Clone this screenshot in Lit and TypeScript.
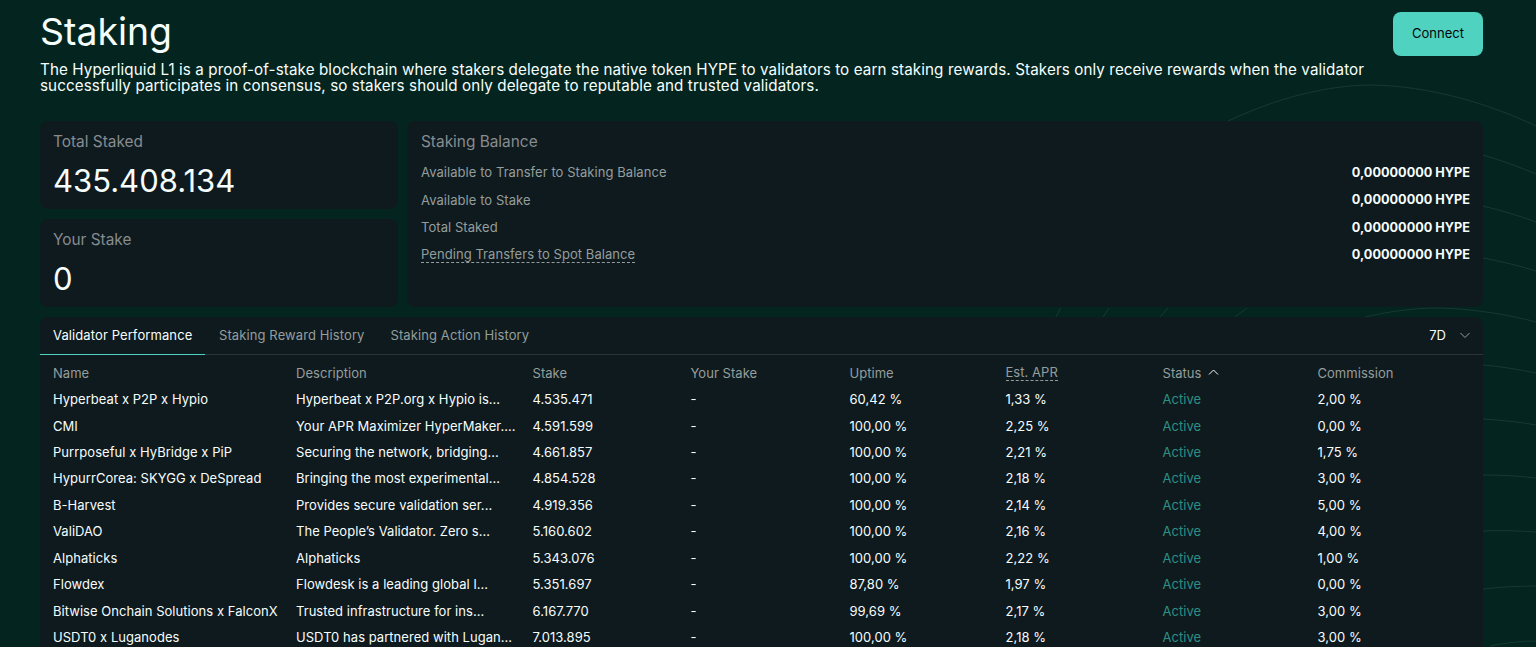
import { LitElement, html, css, svg } from "lit";
import { customElement } from "lit/decorators.js";

const rows = [
  ["Hyperbeat x P2P x Hypio", "Hyperbeat x P2P.org x Hypio is...", "4.535.471", "60,42 %", "1,33 %", "2,00 %"],
  ["CMI", "Your APR Maximizer HyperMaker....", "4.591.599", "100,00 %", "2,25 %", "0,00 %"],
  ["Purrposeful x HyBridge x PiP", "Securing the network, bridging...", "4.661.857", "100,00 %", "2,21 %", "1,75 %"],
  ["HypurrCorea: SKYGG x DeSpread", "Bringing the most experimental...", "4.854.528", "100,00 %", "2,18 %", "3,00 %"],
  ["B-Harvest", "Provides secure validation ser...", "4.919.356", "100,00 %", "2,14 %", "5,00 %"],
  ["ValiDAO", "The People’s Validator. Zero s...", "5.160.602", "100,00 %", "2,16 %", "4,00 %"],
  ["Alphaticks", "Alphaticks", "5.343.076", "100,00 %", "2,22 %", "1,00 %"],
  ["Flowdex", "Flowdesk is a leading global l...", "5.351.697", "87,80 %", "1,97 %", "0,00 %"],
  ["Bitwise Onchain Solutions x FalconX", "Trusted infrastructure for ins...", "6.167.770", "99,69 %", "2,17 %", "3,00 %"],
  ["USDT0 x Luganodes", "USDT0 has partnered with Lugan...", "7.013.895", "100,00 %", "2,18 %", "3,00 %"],
];

const balance = [
  ["Available to Transfer to Staking Balance", false],
  ["Available to Stake", false],
  ["Total Staked", false],
  ["Pending Transfers to Spot Balance", true],
] as const;

@customElement("app-root")
export class AppRoot extends LitElement {
  static styles = css`
    :host {
      display: block;
      height: 647px;
      overflow: hidden;
      position: relative;
      background: #04251f;
      font-family: Inter, "Liberation Sans", sans-serif;
      color: #f6fefd;
    }
    .bg { position: absolute; inset: 0; width: 100%; height: 100%; }
    .page {
      position: relative;
      padding: 12px 53px 0 40px;
      display: flex;
      flex-direction: column;
    }
    .head { display: flex; justify-content: space-between; align-items: flex-start; }
    h1 {
      margin: 0;
      font-size: 37.4px;
      line-height: 40px;
      font-weight: 400;
    }
    .connect {
      width: 90px;
      height: 44px;
      border: 0;
      border-radius: 8px;
      background: #50d2c1;
      color: #04060c;
      font: 400 13px Inter, sans-serif;
      padding: 0 0 2px;
    }
    .intro {
      margin: 6px 0 0;
      width: 1340px;
      font-size: 15.2px;
      letter-spacing: 0.1px;
      line-height: 16px;
      height: 32px;
    }
    .cards {
      display: grid;
      grid-template-columns: 358px 1fr;
      gap: 9px;
      margin-top: 27px;
      height: 186px;
    }
    .stack { display: grid; grid-template-rows: 88px 88px; gap: 10px; }
    .card { background: #0f1a1f; border-radius: 8px; }
    .stat { padding: 13px 13px; box-sizing: border-box; }
    .label { font-size: 15.4px; line-height: 16px; color: #878c8f; }
    .num { font-size: 31px; line-height: 36px; margin-top: 13px; }
    .bal { padding: 13px 13px 12px 14px; }
    .brow {
      display: flex;
      justify-content: space-between;
      align-items: center;
      font-size: 13px;
      letter-spacing: 0.06px;
      height: 16px;
      margin-bottom: 11.6px;
    }
    .brows { margin-top: 14.2px; }
    .brow span:first-child { color: #949e9c; }
    .brow b { font-weight: 700; font-size: 12.7px; letter-spacing: 0; color: #f6fefd; }
    .dash { border-bottom: 1px dashed #949e9c; }
    .table { margin-top: 10px; border-radius: 8px 8px 0 0; }
    .tabs {
      display: flex;
      align-items: stretch;
      height: 37px;
      border-bottom: 1px solid #2d3436;
      font-size: 13px;
      letter-spacing: 0.1px;
      color: #949e9c;
      padding-right: 12px;
    }
    .tab { padding: 0 13px 2px; display: flex; align-items: center; }
    .tab.on {
      box-sizing: border-box;
      width: 165px;
      margin-right: 1px;
      color: #f6fefd;
      border-bottom: 1px solid #50d2c1;
      margin-bottom: -1px;
      white-space: nowrap;
    }
    .tf { margin-left: auto; display: flex; align-items: center; gap: 13px; color: #f6fefd; font-size: 13px; letter-spacing: 0; padding-bottom: 1px; }
    .tf svg { display: block; }
    .grid {
      display: grid;
      grid-template-columns: 243px 236.5px 158px 159px 156px 157px 155px 1fr;
      padding-left: 13px;
      font-size: 13px;
      letter-spacing: 0.04px;
    }
    .grid > div {
      height: 26.44px;
      display: flex;
      align-items: center;
      white-space: nowrap;
    }
    .th { color: #949e9c; }
    .grid > .th { height: 25.9px; padding-top: 5px; }
    .th span.dash { line-height: 15px; }
    .th svg { margin-left: 6px; }
    .active { color: #2d8f83; }
  `;

  private bg() {
    const arcs: string[] = [
      "M1228 121C1290 92 1340 85 1372 85C1430 86 1490 104 1536 126",
      "M1483 155C1500 160 1520 167 1536 174",
      "M1483 206C1500 210 1520 216 1536 222",
      "M1483 258C1500 261 1520 266 1536 271",
      "M1365 317C1400 309 1425 308 1440 308C1475 309 1510 315 1536 322",
      "M1483 365C1500 366 1520 370 1536 373",
      "M1483 419C1500 420 1520 422 1536 425",
      "M1483 475C1500 475 1520 476 1536 478",
      "M1483 531C1500 530 1520 531 1536 532",
      "M1483 589C1500 587 1520 586 1536 586",
      "M1490 646C1505 643 1520 641 1536 641",
      "M1056 317L1060.500 308",
      "M1103 317L1109 308",
      "M1160 317L1168 308",
      "M1235 317L1247 308",
    ];
    return html`<svg class="bg" viewBox="0 0 1536 647" fill="none" stroke="#173933" stroke-width="1">
      ${arcs.map((d) => svg`<path d=${d}></path>`)}
    </svg>`;
  }

  render() {
    return html`
      ${this.bg()}
      <div class="page">
        <div class="head">
          <h1>Staking</h1>
          <button class="connect">Connect</button>
        </div>
        <p class="intro">The Hyperliquid L1 is a proof-of-stake blockchain where stakers delegate the native token HYPE to validators to earn staking rewards. Stakers only receive rewards when the validator successfully participates in consensus, so stakers should only delegate to reputable and trusted validators.</p>
        <div class="cards">
          <div class="stack">
            <div class="card stat"><div class="label">Total Staked</div><div class="num">435.408.134</div></div>
            <div class="card stat"><div class="label">Your Stake</div><div class="num">0</div></div>
          </div>
          <div class="card bal">
            <div class="label">Staking Balance</div>
            <div class="brows">
              ${balance.map(([t, d]) => html`<div class="brow"><span class=${d ? "dash" : ""}>${t}</span><b>0,00000000 HYPE</b></div>`)}
            </div>
          </div>
        </div>
        <div class="card table">
          <div class="tabs">
            <div class="tab on">Validator Performance</div>
            <div class="tab">Staking Reward History</div>
            <div class="tab">Staking Action History</div>
            <div class="tf">7D
              <svg width="12" height="12" viewBox="0 0 12 12" fill="none" stroke="#949e9c" stroke-width="1"><path d="M1.5 4L6 8.5L10.500 4"></path></svg>
            </div>
          </div>
          <div class="grid">
            <div class="th">Name</div>
            <div class="th">Description</div>
            <div class="th">Stake</div>
            <div class="th">Your Stake</div>
            <div class="th">Uptime</div>
            <div class="th"><span class="dash">Est. APR</span></div>
            <div class="th">Status<svg width="11" height="11" viewBox="0 0 11 11" fill="none" stroke="#f6fefd" stroke-width="1"><path d="M1 7.500L5.500 3L10 7.500"></path></svg></div>
            <div class="th">Commission</div>
            ${rows.map((r) => html`
              <div>${r[0]}</div><div>${r[1]}</div><div>${r[2]}</div><div>-</div>
              <div>${r[3]}</div><div>${r[4]}</div><div class="active">Active</div><div>${r[5]}</div>
            `)}
          </div>
        </div>
      </div>
    `;
  }
}
